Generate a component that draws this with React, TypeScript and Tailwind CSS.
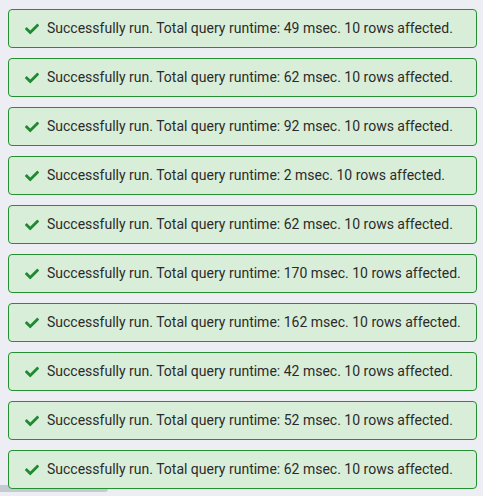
import { FaCheck } from "react-icons/fa";

const runtimes = [49, 62, 92, 2, 62, 170, 162, 42, 52, 62];

export default function App() {
  return (
    <div className="relative h-[496px] w-[483px] overflow-hidden bg-[#eceef3] pt-[9px] font-['Roboto',sans-serif]">
      {/* scrollbar thumb, sits behind the last row */}
      <div className="absolute bottom-[4px] left-0 h-[7px] w-[108px] rounded-r-sm bg-[#c5c9d1]" />
      <div className="relative flex flex-col gap-[10px] px-2">
        {runtimes.map((ms, i) => (
          <div
            key={i}
            className="flex h-[39px] w-[469px] items-center gap-[8px] rounded-[4px] border border-[#25902f] bg-[#d9eed9] pl-[16px] text-[14px] text-[#2b2b2b]"
          >
            <FaCheck className="h-[14px] w-[14px] text-[#1f8a2f]" />
            <span>
              Successfully run. Total query runtime: {ms} msec. 10 rows affected.
            </span>
          </div>
        ))}
      </div>
    </div>
  );
}
